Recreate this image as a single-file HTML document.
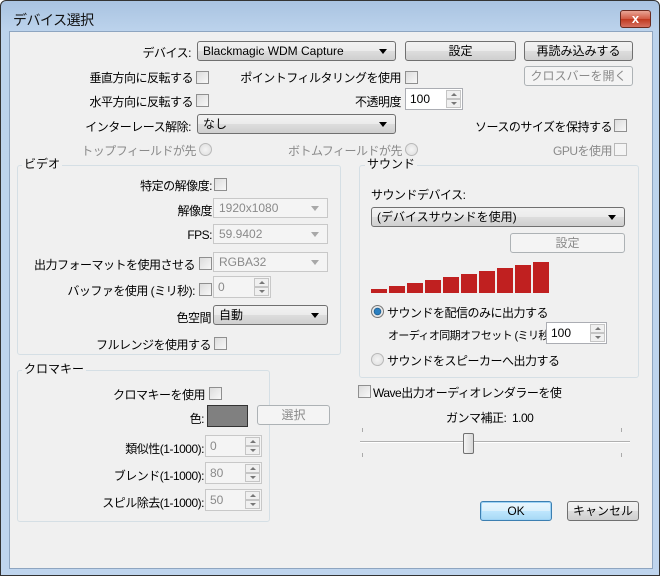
<!DOCTYPE html>
<html><head><meta charset="utf-8"><style>
*{box-sizing:border-box;margin:0;padding:0}
body{width:660px;height:576px;overflow:hidden;background:#fff;font-family:"Liberation Sans","Noto Sans CJK JP",sans-serif;font-size:12px;color:#000}
#win{position:absolute;left:0;top:0;width:660px;height:576px;border:1px solid #333;border-radius:6px 6px 0 0;background:linear-gradient(#a9c3e1,#bcd3ec 30px,#bfd5ee);}
#client{position:absolute;left:8px;top:30px;width:644px;height:538px;background:#f0f0f0;border:1px solid #8ea5c0}
#c{position:absolute;left:0;top:0;width:660px;height:576px}
.a{position:absolute;white-space:nowrap;letter-spacing:-0.5px}
.r{position:absolute;white-space:nowrap;text-align:right;letter-spacing:-0.5px}
.g{color:#8a8a8a}
.cb{position:absolute;width:13px;height:13px;border:1px solid #8f8f8f;background:linear-gradient(135deg,#dcdcdc,#f8f8f8)}
.cb.d{border-color:#b8b8b8;background:#f4f4f4}
.rd{position:absolute;width:13px;height:13px;border-radius:50%;border:1px solid #b8b8b8;background:radial-gradient(#f4f4f4,#ddd)}
.combo{position:absolute;height:20px;border:1px solid #707070;border-radius:3px;background:linear-gradient(#f2f2f2,#ebebeb 50%,#dddddd 51%,#cfcfcf);padding:2px 5px;line-height:14px;white-space:nowrap}
.combo:after{content:"";position:absolute;right:8px;top:7px;border:4px solid transparent;border-top:5px solid #000;border-bottom:0}
.combo.d{background:#f4f4f4;border-color:#c8c8c8;border-radius:0;color:#8a8a8a}
.combo.d:after{border-top-color:#a8a8a8}
.btn{position:absolute;height:20px;border:1px solid #707070;border-radius:3px;background:linear-gradient(#f2f2f2,#ebebeb 50%,#dddddd 51%,#cfcfcf);text-align:center;line-height:18px;white-space:nowrap}
.btn.d{border-color:#adb2b5;background:#f4f4f4;color:#8a8a8a}
.spin{position:absolute;height:22px;border:1px solid #abadb3;background:#fff;padding:2px 4px;line-height:16px}
.spin.d{border-color:#c8c8c8;background:#f4f4f4;color:#8a8a8a}
.spin i{position:absolute;right:1px;width:15px;height:9px;border:1px solid #c5c5c5;background:#f0f0f0}
.spin i.u{top:1px}.spin i.w{bottom:1px}
.spin i:after{content:"";position:absolute;left:4px;top:2px;border:3px solid transparent}
.spin i.u:after{border-bottom:3px solid #777;border-top:0}
.spin i.w:after{border-top:3px solid #777;border-bottom:0}
.grp{position:absolute;border:1px solid #d5dfe5;border-radius:3px}
.gl{position:absolute;background:#f0f0f0;padding:0 2px;line-height:14px;white-space:nowrap}
.bar{position:absolute;background:#c02020;bottom:0;width:16px}
</style></head><body>
<div id="win">
<div class="a" style="left:12px;top:9px;font-size:14px;color:#111">デバイス選択</div>
<div style="position:absolute;left:619px;top:9px;width:31px;height:18px;border:1px solid #6b2b20;border-radius:3px;background:linear-gradient(#e8a595,#d25a43 50%,#c0391f 51%,#d57060);color:#fff;font-weight:bold;text-align:center;line-height:16px;font-size:13px">x</div>
<div id="client"></div>
</div>
<div id="c">
<div class="r" style="right:469px;top:44px">デバイス:</div>
<div class="combo" style="left:197px;top:41px;width:199px">Blackmagic WDM Capture</div>
<div class="btn" style="left:405px;top:41px;width:111px">設定</div>
<div class="btn" style="left:524px;top:41px;width:109px">再読み込みする</div>

<div class="r" style="right:467px;top:69px">垂直方向に反転する</div><div class="cb" style="left:196px;top:71px"></div>
<div class="r" style="right:259px;top:69px">ポイントフィルタリングを使用</div><div class="cb" style="left:405px;top:71px"></div>
<div class="btn d" style="left:524px;top:66px;width:109px">クロスバーを開く</div>

<div class="r" style="right:467px;top:93px">水平方向に反転する</div><div class="cb" style="left:196px;top:94px"></div>
<div class="r" style="right:259px;top:93px">不透明度</div>
<div class="spin" style="left:405px;top:88px;width:58px">100<i class="u"></i><i class="w"></i></div>

<div class="r" style="right:469px;top:118px">インターレース解除:</div>
<div class="combo" style="left:197px;top:114px;width:199px">なし</div>
<div class="r" style="right:48px;top:118px">ソースのサイズを保持する</div><div class="cb" style="left:614px;top:119px"></div>

<div class="r g" style="right:464px;top:142px">トップフィールドが先</div><div class="rd" style="left:199px;top:143px"></div>
<div class="r g" style="right:258px;top:142px">ボトムフィールドが先</div><div class="rd" style="left:405px;top:143px"></div>
<div class="r g" style="right:48px;top:142px">GPUを使用</div><div class="cb d" style="left:614px;top:143px"></div>

<div class="grp" style="left:17px;top:165px;width:324px;height:190px"></div>
<div class="gl" style="left:22px;top:157px">ビデオ</div>
<div class="r" style="right:448px;top:177px">特定の解像度:</div><div class="cb" style="left:214px;top:178px"></div>
<div class="r" style="right:448px;top:202px">解像度</div><div class="combo d" style="left:213px;top:198px;width:115px">1920x1080</div>
<div class="r" style="right:448px;top:228px">FPS:</div><div class="combo d" style="left:213px;top:224px;width:115px">59.9402</div>
<div class="r" style="right:465px;top:256px">出力フォーマットを使用させる</div><div class="cb" style="left:199px;top:257px"></div><div class="combo d" style="left:213px;top:252px;width:115px">RGBA32</div>
<div class="r" style="right:465px;top:282px">バッファを使用 (ミリ秒):</div><div class="cb" style="left:199px;top:283px"></div>
<div class="spin d" style="left:213px;top:276px;width:58px">0<i class="u"></i><i class="w"></i></div>
<div class="r" style="right:449px;top:309px">色空間</div><div class="combo" style="left:213px;top:305px;width:115px">自動</div>
<div class="r" style="right:449px;top:336px">フルレンジを使用する</div><div class="cb" style="left:214px;top:337px"></div>

<div class="grp" style="left:359px;top:165px;width:280px;height:213px"></div>
<div class="gl" style="left:365px;top:157px">サウンド</div>
<div class="a" style="left:371px;top:186px">サウンドデバイス:</div>
<div class="combo" style="left:371px;top:207px;width:254px">(デバイスサウンドを使用)</div>
<div class="btn d" style="left:510px;top:233px;width:115px">設定</div>
<div style="position:absolute;left:371px;top:258px;width:180px;height:35px">
<div class="bar" style="left:0;height:4px"></div><div class="bar" style="left:18px;height:7px"></div><div class="bar" style="left:36px;height:10px"></div><div class="bar" style="left:54px;height:13px"></div><div class="bar" style="left:72px;height:16px"></div><div class="bar" style="left:90px;height:19px"></div><div class="bar" style="left:108px;height:22px"></div><div class="bar" style="left:126px;height:25px"></div><div class="bar" style="left:144px;height:28px"></div><div class="bar" style="left:162px;height:31px"></div>
</div>
<div class="rd" style="left:371px;top:305px;border-color:#777;background:radial-gradient(#2a7fc0 2.5px,#1d5a8a 3.5px,#e8e8e8 4px)"></div>
<div class="a" style="left:387px;top:304px">サウンドを配信のみに出力する</div>
<div class="a" style="left:388px;top:327px;font-size:11px;letter-spacing:-0.6px">オーディオ同期オフセット (ミリ秒):</div>
<div class="spin" style="left:546px;top:322px;width:61px">100<i class="u"></i><i class="w"></i></div>
<div class="rd" style="left:371px;top:353px"></div>
<div class="a" style="left:387px;top:352px">サウンドをスピーカーへ出力する</div>

<div class="grp" style="left:17px;top:370px;width:253px;height:152px"></div>
<div class="gl" style="left:22px;top:362px">クロマキー</div>
<div class="r" style="right:455px;top:386px">クロマキーを使用</div><div class="cb" style="left:209px;top:387px"></div>
<div class="r" style="right:456px;top:410px">色:</div>
<div style="position:absolute;left:207px;top:405px;width:41px;height:22px;background:#808080;border:1px solid #333"></div>
<div class="btn d" style="left:257px;top:405px;width:73px">選択</div>
<div class="r" style="right:456px;top:440px">類似性(1-1000):</div><div class="spin d" style="left:205px;top:435px;width:57px">0<i class="u"></i><i class="w"></i></div>
<div class="r" style="right:456px;top:467px">ブレンド(1-1000):</div><div class="spin d" style="left:205px;top:462px;width:57px">80<i class="u"></i><i class="w"></i></div>
<div class="r" style="right:456px;top:494px">スピル除去(1-1000):</div><div class="spin d" style="left:205px;top:489px;width:57px">50<i class="u"></i><i class="w"></i></div>

<div class="cb" style="left:358px;top:385px"></div>
<div class="a" style="left:373px;top:384px">Wave出力オーディオレンダラーを使</div>
<div class="a" style="left:446px;top:409px">ガンマ補正:&nbsp;&nbsp;1.00</div>
<div style="position:absolute;left:360px;top:441px;width:270px;height:2px;border-top:1px solid #b0b0b0;border-bottom:1px solid #fff"></div>
<div style="position:absolute;left:362px;top:428px;width:1px;height:4px;background:#aaa"></div>
<div style="position:absolute;left:621px;top:428px;width:1px;height:4px;background:#aaa"></div>
<div style="position:absolute;left:362px;top:453px;width:1px;height:4px;background:#aaa"></div>
<div style="position:absolute;left:621px;top:453px;width:1px;height:4px;background:#aaa"></div>
<div style="position:absolute;left:463px;top:433px;width:11px;height:21px;border:1px solid #707070;border-radius:2px;background:linear-gradient(90deg,#f4f4f4,#d8d8d8)"></div>
<div class="btn" style="left:480px;top:501px;width:72px;border-color:#3c7fb1;background:linear-gradient(#eaf6fd,#d9f0fc 50%,#bee6fd 51%,#a7d9f5);box-shadow:inset 0 0 0 1px #9ed3f5">OK</div>
<div class="btn" style="left:567px;top:501px;width:72px">キャンセル</div>
</div>
</body></html>
